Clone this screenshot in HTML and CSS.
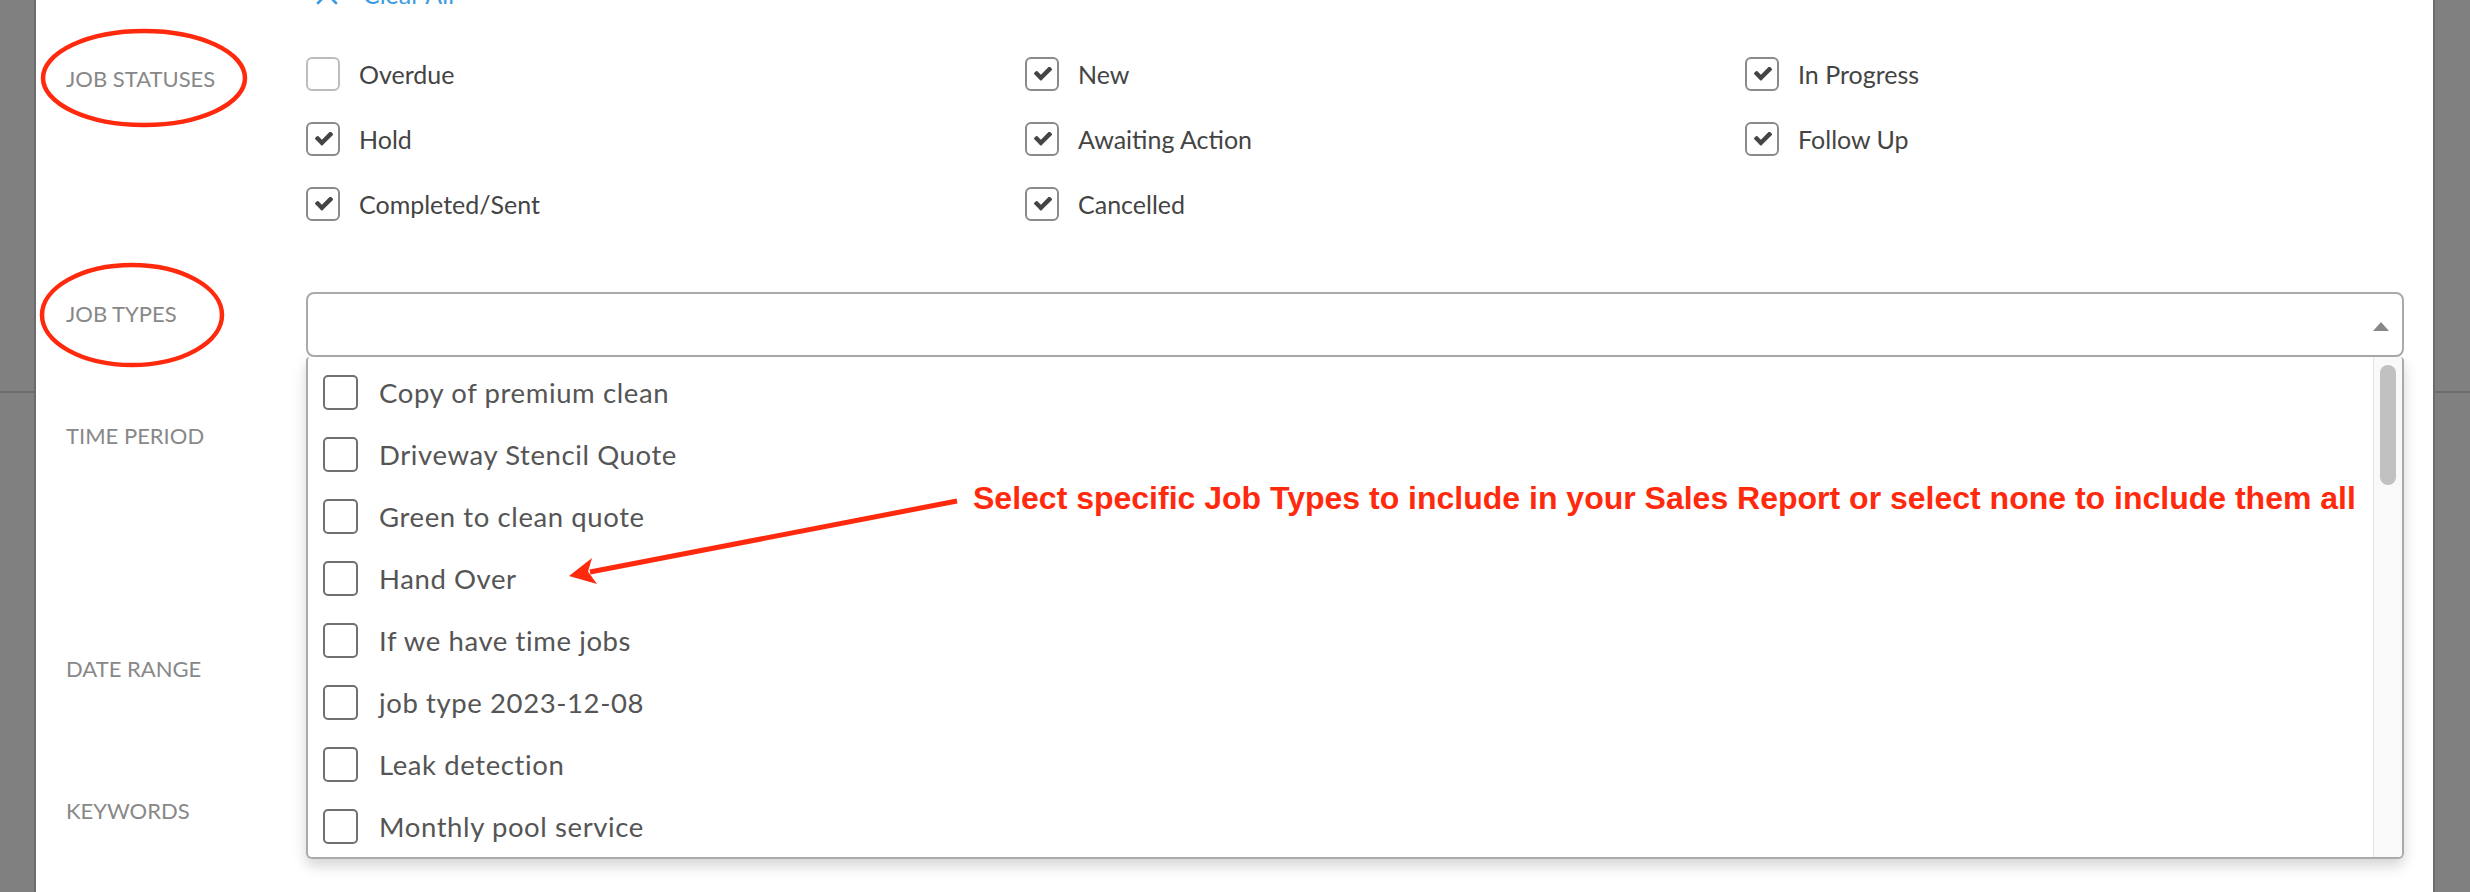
FILE: index.html
```html
<!DOCTYPE html>
<html lang="en">
<head>
<meta charset="utf-8">
<title>Sales Report Filters</title>
<link rel="stylesheet" href="styles.css">
</head>
<body>
<div class="modal">
  <div class="clear-row">
    <a class="clear-all" href="#">
      <svg class="clear-icon" width="24" height="24" viewBox="0 0 24 24"><path d="M3 3 L21 21 M21 3 L3 21" fill="none" stroke="#3d9be0" stroke-width="2.6" stroke-linecap="round"/></svg>
      <span>Clear All</span>
    </a>
  </div>

  <div class="form-row statuses">
    <div class="label">Job Statuses</div>
    <div class="status-grid">
      <label class="status"><span class="cb"></span><span>Overdue</span></label>
      <label class="status"><span class="cb checked"><svg width="18" height="14" viewBox="121 402 1550 1124"><path d="M1671 566q0 40-28 68l-724 724-136 136q-28 28-68 28t-68-28l-136-136-362-362q-28-28-28-68t28-68l136-136q28-28 68-28t68 28l294 295 656-657q28-28 68-28t68 28l136 136q28 28 28 68z" fill="#444"/></svg></span><span>New</span></label>
      <label class="status"><span class="cb checked"><svg width="18" height="14" viewBox="121 402 1550 1124"><path d="M1671 566q0 40-28 68l-724 724-136 136q-28 28-68 28t-68-28l-136-136-362-362q-28-28-28-68t28-68l136-136q28-28 68-28t68 28l294 295 656-657q28-28 68-28t68 28l136 136q28 28 28 68z" fill="#444"/></svg></span><span>In Progress</span></label>
      <label class="status"><span class="cb checked"><svg width="18" height="14" viewBox="121 402 1550 1124"><path d="M1671 566q0 40-28 68l-724 724-136 136q-28 28-68 28t-68-28l-136-136-362-362q-28-28-28-68t28-68l136-136q28-28 68-28t68 28l294 295 656-657q28-28 68-28t68 28l136 136q28 28 28 68z" fill="#444"/></svg></span><span>Hold</span></label>
      <label class="status"><span class="cb checked"><svg width="18" height="14" viewBox="121 402 1550 1124"><path d="M1671 566q0 40-28 68l-724 724-136 136q-28 28-68 28t-68-28l-136-136-362-362q-28-28-28-68t28-68l136-136q28-28 68-28t68 28l294 295 656-657q28-28 68-28t68 28l136 136q28 28 28 68z" fill="#444"/></svg></span><span>Awaiting Action</span></label>
      <label class="status"><span class="cb checked"><svg width="18" height="14" viewBox="121 402 1550 1124"><path d="M1671 566q0 40-28 68l-724 724-136 136q-28 28-68 28t-68-28l-136-136-362-362q-28-28-28-68t28-68l136-136q28-28 68-28t68 28l294 295 656-657q28-28 68-28t68 28l136 136q28 28 28 68z" fill="#444"/></svg></span><span>Follow Up</span></label>
      <label class="status"><span class="cb checked"><svg width="18" height="14" viewBox="121 402 1550 1124"><path d="M1671 566q0 40-28 68l-724 724-136 136q-28 28-68 28t-68-28l-136-136-362-362q-28-28-28-68t28-68l136-136q28-28 68-28t68 28l294 295 656-657q28-28 68-28t68 28l136 136q28 28 28 68z" fill="#444"/></svg></span><span>Completed/Sent</span></label>
      <label class="status"><span class="cb checked"><svg width="18" height="14" viewBox="121 402 1550 1124"><path d="M1671 566q0 40-28 68l-724 724-136 136q-28 28-68 28t-68-28l-136-136-362-362q-28-28-28-68t28-68l136-136q28-28 68-28t68 28l294 295 656-657q28-28 68-28t68 28l136 136q28 28 28 68z" fill="#444"/></svg></span><span>Cancelled</span></label>
    </div>
  </div>

  <div class="form-row types">
    <div class="label">Job Types</div>
    <div class="select-wrap">
      <div class="select-input"><span class="caret"></span></div>
      <div class="dropdown">
        <ul class="options">
          <li><span class="ocb"></span><span>Copy of premium clean</span></li>
          <li><span class="ocb"></span><span>Driveway Stencil Quote</span></li>
          <li><span class="ocb"></span><span>Green to clean quote</span></li>
          <li><span class="ocb"></span><span>Hand Over</span></li>
          <li><span class="ocb"></span><span>If we have time jobs</span></li>
          <li><span class="ocb"></span><span>job type 2023-12-08</span></li>
          <li><span class="ocb"></span><span>Leak detection</span></li>
          <li><span class="ocb"></span><span>Monthly pool service</span></li>
        </ul>
        <div class="scrollbar"><div class="thumb"></div></div>
      </div>
    </div>
  </div>

  <div class="form-row period"><div class="label">Time Period</div></div>
  <div class="form-row range"><div class="label">Date Range</div></div>
  <div class="form-row keywords"><div class="label">Keywords</div></div>
</div>

<div class="annotations">
  <svg class="marks" width="2470" height="892" viewBox="0 0 2470 892">
    <ellipse cx="144" cy="78" rx="101" ry="47" fill="none" stroke="#ff2a0e" stroke-width="4.5"/>
    <ellipse cx="132" cy="315" rx="90" ry="50" fill="none" stroke="#ff2a0e" stroke-width="4.5"/>
    <line x1="957" y1="501" x2="590" y2="572" stroke="#ff2a0e" stroke-width="5"/>
    <path d="M569 576 L592 558 L588 571.5 L597 584 Z" fill="#ff2a0e"/>
  </svg>
  <div class="note">Select specific Job Types to include in your Sales Report or select none to include them all</div>
</div>
</body>
</html>
```

FILE: styles.css
```css
* { box-sizing: border-box; }

html, body {
  margin: 0;
  padding: 0;
}

body {
  width: 2470px;
  height: 892px;
  overflow: hidden;
  position: relative;
  background-color: #808080;
  background-image: linear-gradient(to bottom, transparent 391px, #6c6c6c 391px, #6c6c6c 393px, transparent 393px);
  font-family: Lato, "Noto Sans", sans-serif;
}

.modal {
  margin-left: 36px;
  width: 2397px;
  height: 892px;
  background: #fff;
  box-shadow: -2px 0 0 #6c6c6c, 2px 0 0 #6c6c6c;
  padding: 0 29px 0 30px;
  overflow: hidden;
}

/* clear all link (mostly cut off at top) */
.clear-row {
  margin-top: -21px;
  height: 30px;
  padding-left: 249px;
}
.clear-all {
  display: inline-flex;
  align-items: center;
  gap: 24px;
  color: #3d9be0;
  text-decoration: none;
  font-size: 25px;
  line-height: 30px;
}
.clear-icon { display: block; }

/* rows */
.form-row {
  display: flex;
  align-items: flex-start;
}
.label {
  width: 240px;
  flex-shrink: 0;
  padding-top: 7px;
  font-size: 22px;
  line-height: 30px;
  color: #888;
  text-transform: uppercase;
}

.statuses { margin-top: 48px; }

.status-grid {
  flex: 1;
  display: grid;
  grid-template-columns: 719px 720px 1fr;
  row-gap: 31px;
}
.status {
  display: flex;
  align-items: center;
  gap: 19px;
  height: 34px;
  font-size: 25px;
  color: #444;
}
.cb {
  width: 34px;
  height: 34px;
  flex-shrink: 0;
  border: 2px solid #bdbdbd;
  border-radius: 6px;
  display: flex;
  align-items: center;
  justify-content: center;
}
.cb.checked { border-color: #8a8a8a; }
.cb svg { display: block; margin-left: 1px; }

/* job types select */
.types { margin-top: 71px; }
.select-wrap {
  flex: 1;
  position: relative;
}
.select-input {
  height: 65px;
  border: 2px solid #aaa;
  border-radius: 8px;
  display: flex;
  align-items: center;
  justify-content: flex-end;
  padding: 4px 13px 0 0;
}
.caret {
  width: 0;
  height: 0;
  border-left: 8px solid transparent;
  border-right: 8px solid transparent;
  border-bottom: 9px solid #888;
}

.dropdown {
  position: absolute;
  top: 65px;
  left: 0;
  right: 0;
  height: 502px;
  background: #fff;
  border: 2px solid #aaa;
  border-top: 0;
  border-radius: 4px 4px 6px 6px;
  box-shadow: 0 7px 14px rgba(0, 0, 0, 0.17);
  overflow: hidden;
  z-index: 2;
}
.options {
  list-style: none;
  margin: 0;
  padding: 4px 0 0 15px;
}
.options li {
  height: 62px;
  display: flex;
  align-items: center;
  gap: 21px;
  font-size: 27.5px;
  letter-spacing: 0.6px;
  color: #555;
}
.ocb {
  width: 35px;
  height: 35px;
  flex-shrink: 0;
  border: 2px solid #707070;
  border-radius: 5px;
}
.scrollbar {
  position: absolute;
  top: 0;
  right: 0;
  bottom: 0;
  width: 29px;
  background: #f9f9f9;
  border-left: 1px solid #e4e4e4;
}
.thumb {
  margin: 8px 0 0 6px;
  width: 16px;
  height: 120px;
  border-radius: 8px;
  background: #c1c1c1;
}

.period { margin-top: 57px; height: 233px; }
.range { height: 142px; }
.keywords { height: 100px; }

/* annotation overlay */
.annotations {
  position: absolute;
  left: 0;
  top: 0;
  width: 2470px;
  height: 892px;
  pointer-events: none;
  z-index: 5;
}
.marks {
  position: absolute;
  left: 0;
  top: 0;
}
.note {
  position: absolute;
  left: 973px;
  top: 482px;
  font-family: "Liberation Sans", Arial, sans-serif;
  font-weight: bold;
  font-size: 32px;
  line-height: 1;
  color: #ff2a0e;
  white-space: nowrap;
}
```
